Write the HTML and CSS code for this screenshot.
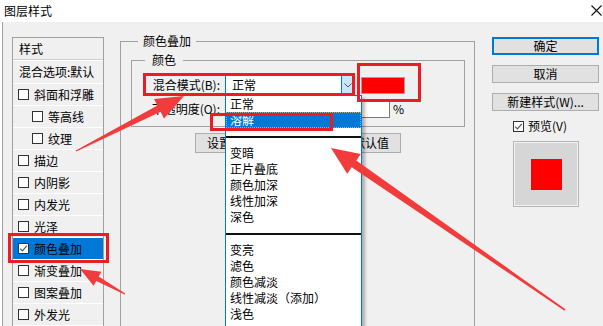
FILE: index.html
```html
<!DOCTYPE html>
<html lang="zh-CN">
<head>
<meta charset="utf-8">
<title>图层样式</title>
<link rel="stylesheet" href="styles.css">
</head>
<body>
<div class="window">
  <div class="titlebar">
    <span class="title">图层样式</span>
    <svg class="close" width="11" height="11" viewBox="0 0 11 11"><path d="M0.5 0.5L10.5 10.5M10.5 0.5L0.5 10.5" stroke="#111" stroke-width="1.1" fill="none"/></svg>
  </div>
  <div class="body">
    <div class="list">
      <div class="li head">样式</div>
      <div class="li blend">混合选项:默认</div>
      <div class="li"><span class="cb"></span>斜面和浮雕</div>
      <div class="li sub"><span class="cb"></span>等高线</div>
      <div class="li sub"><span class="cb"></span>纹理</div>
      <div class="li"><span class="cb"></span>描边</div>
      <div class="li"><span class="cb"></span>内阴影</div>
      <div class="li"><span class="cb"></span>内发光</div>
      <div class="li"><span class="cb"></span>光泽</div>
      <div class="li sel"><span class="cb"><svg width="9" height="9" viewBox="0 0 9 9"><path d="M1.2 4.6L3.4 6.8L7.8 1.8" stroke="#555" stroke-width="1.2" fill="none"/></svg></span>颜色叠加</div>
      <div class="li"><span class="cb"></span>渐变叠加</div>
      <div class="li"><span class="cb"></span>图案叠加</div>
      <div class="li"><span class="cb"></span>外发光</div>
    </div>

    <fieldset class="group outer">
      <legend>颜色叠加</legend>
      <fieldset class="group inner">
        <legend>颜色</legend>
        <div class="row r1">
          <span class="lbl">混合模式(B):</span>
          <div class="combo">
            <span class="val">正常</span>
            <span class="drop"><svg width="8" height="5" viewBox="0 0 8 5"><path d="M0.5 0.5L4 4L7.5 0.5" stroke="#555" stroke-width="1" fill="none"/></svg></span>
            <div class="popup">
              <div class="opt">正常</div>
              <div class="opt hl">溶解</div>
              <div class="sep"></div>
              <div class="opt">变暗</div>
              <div class="opt">正片叠底</div>
              <div class="opt">颜色加深</div>
              <div class="opt">线性加深</div>
              <div class="opt">深色</div>
              <div class="sep"></div>
              <div class="opt">变亮</div>
              <div class="opt">滤色</div>
              <div class="opt">颜色减淡</div>
              <div class="opt">线性减淡（添加）</div>
              <div class="opt">浅色</div>
            </div>
          </div>
          <span class="swatch"></span>
        </div>
        <div class="row r2">
          <span class="lbl">不透明度(O):</span>
          <span class="slider"></span>
          <span class="num"></span>
          <span class="pct">%</span>
        </div>
      </fieldset>
      <div class="btnrow">
        <span class="btn wide">设置为默认值</span>
        <span class="btn wide">复位为默认值</span>
      </div>
    </fieldset>

    <div class="side">
      <span class="btn side-btn default">确定</span>
      <span class="btn side-btn">取消</span>
      <span class="btn side-btn">新建样式(W)...</span>
      <div class="preview-check"><span class="cb"><svg width="9" height="9" viewBox="0 0 9 9"><path d="M1.2 4.6L3.4 6.8L7.8 1.8" stroke="#555" stroke-width="1.2" fill="none"/></svg></span>预览(V)</div>
      <div class="preview"><span class="sq"></span></div>
    </div>
  </div>

  <svg class="annot" width="603" height="326" viewBox="0 0 603 326">
    <g fill="none" stroke="#ec1c24" stroke-width="3">
      <rect x="144.5" y="74.5" width="209" height="20"/>
      <rect x="358.5" y="64.5" width="61" height="36"/>
      <rect x="211.5" y="114.5" width="120" height="15"/>
      <rect x="9.5" y="234.5" width="98" height="27"/>
    </g>
    <g fill="#f23c3c">
      <polygon points="76.3,151.5 160.6,111.8 164.0,118.5 184,96 154.0,98.9 157.4,105.6 75.7,150.5"/>
      <polygon points="125.3,293.5 98.7,276.5 101.4,271.7 80,269 93.6,285.7 96.3,280.9 124.7,294.5"/>
      <polygon points="564.5,310.7 351.7,167.2 347.2,173.8 331,148 360.8,154.0 356.3,160.6 565.5,309.3"/>
    </g>
  </svg>
</div>
</body>
</html>
```

FILE: styles.css
```css
* { box-sizing: border-box; }
html, body { margin: 0; padding: 0; }
body {
  width: 603px;
  height: 326px;
  overflow: hidden;
  font-family: "Noto Sans CJK SC", "Microsoft YaHei", sans-serif;
  font-size: 12px;
  line-height: 16px;
  color: #000;
}
.window {
  position: relative;
  width: 603px;
  height: 326px;
  background: #fff;
  overflow: hidden;
}
.titlebar {
  height: 22px;
  display: flex;
  align-items: center;
  justify-content: space-between;
  padding: 0 1px 0 4px;
  background: #fff;
}
.close { display: block; margin-top: -1px; }

.body {
  display: flex;
  align-items: flex-start;
  height: 304px;
  margin-left: 2px;
  border-left: 1px solid #a0a0a0;
  background: #f0f0f0;
  padding-left: 9px;
}

/* left style list */
.list {
  flex: none;
  width: 92px;
  height: 300px;
  margin-top: 15px;
  border: 1px solid #a0a0a0;
}
.li {
  height: 22px;
  display: flex;
  align-items: center;
  padding-left: 5px;
  border-bottom: 1px solid #fff;
  white-space: nowrap;
}
.li.head { height: 22px; padding-left: 6px; border-bottom-color: #cfcfcf; }
.li.blend { height: 24px; padding-left: 6px; border-top: 1px solid #fff; }
.li.sub { padding-left: 19px; }
.li.sel { background: #0078d7; }
.cb {
  flex: none;
  width: 11px;
  height: 11px;
  margin-right: 5px;
  border: 1px solid #333;
  background: #fff;
  display: flex;
  align-items: center;
  justify-content: center;
}

/* group boxes */
.group {
  margin: 0;
  min-width: 0;
  border: 1px solid #a0a0a0;
}
.group > legend {
  padding: 0 5px;
  line-height: 16px;
}
.outer {
  flex: none;
  width: 355px;
  height: 300px;
  margin: 11px 0 0 16px;
  padding: 3px 9px 0 10px;
}
.outer > legend { margin-left: 7px; }
.inner {
  width: 334px;
  padding: 0 0 8px 0;
}
.inner > legend { margin-left: 13px; padding: 0 7px; }

.row { display: flex; align-items: center; }
.r1 { height: 20px; margin-top: 7px; }
.r2 { height: 18px; margin-top: 5px; }
.lbl {
  flex: none;
  width: 88px;
  margin-right: 5px;
  text-align: right;
  white-space: nowrap;
}
.combo {
  position: relative;
  flex: none;
  width: 129px;
  height: 20px;
  display: flex;
  align-items: center;
  padding-left: 6px;
  border: 1px solid #0078d7;
  background: #fff;
  z-index: 5;
}
.combo .val { flex: 1; }
.drop {
  width: 12px;
  height: 18px;
  display: flex;
  align-items: center;
  justify-content: center;
  background: #cce4f7;
  border-left: 1px solid #0078d7;
}
.swatch {
  flex: none;
  width: 44px;
  height: 17px;
  margin-left: 7px;
  background: #ff0000;
  border: 1px solid #a0a0a0;
}
.popup {
  position: absolute;
  left: -1px;
  top: 19px;
  width: 137px;
  height: 235px;
  background: #fff;
  border: 1px solid #0078d7;
  box-shadow: 3px 3px 3px rgba(0, 0, 0, 0.28);
}
.opt {
  height: 16px;
  line-height: 16px;
  padding-left: 4px;
  white-space: nowrap;
}
.opt.hl {
  background: #0078d7;
  color: #fff;
  outline: 1px dotted #f0a030;
  outline-offset: -1px;
}
.sep {
  height: 2px;
  margin: 8px 0 7px;
  background: #111;
}
.slider { flex: none; width: 95px; }
.num {
  flex: none;
  width: 70px;
  height: 18px;
  background: #fff;
  border: 1px solid #7a7a7a;
}
.pct { margin-left: 3px; }

.btn {
  display: flex;
  align-items: center;
  justify-content: center;
  background: #e1e1e1;
  border: 1px solid #adadad;
  white-space: nowrap;
}
.btnrow {
  display: flex;
  justify-content: center;
  gap: 14px;
  margin-top: 6px;
}
.btn.wide { width: 96px; height: 20px; }

/* right column */
.side {
  flex: none;
  width: 107px;
  margin: 15px 0 0 17px;
  display: flex;
  flex-direction: column;
}
.side-btn { height: 18px; }
.side-btn + .side-btn { margin-top: 10px; }
.side-btn.default { border: 2px solid #0078d7; }
.preview-check {
  display: flex;
  align-items: center;
  height: 16px;
  margin-top: 7px;
  padding-left: 21px;
}
.preview-check .cb { margin-right: 4px; }
.preview {
  width: 66px;
  height: 66px;
  margin: 7px 0 0 21px;
  display: flex;
  align-items: center;
  justify-content: center;
  background: #d6d6d6;
  border: 1px solid #b4b4b4;
  box-shadow: inset 0 0 0 1px #f4f4f4;
}
.sq { width: 31px; height: 31px; background: #ff0000; }

.annot {
  position: absolute;
  left: 0;
  top: 0;
  pointer-events: none;
  z-index: 20;
}
```
